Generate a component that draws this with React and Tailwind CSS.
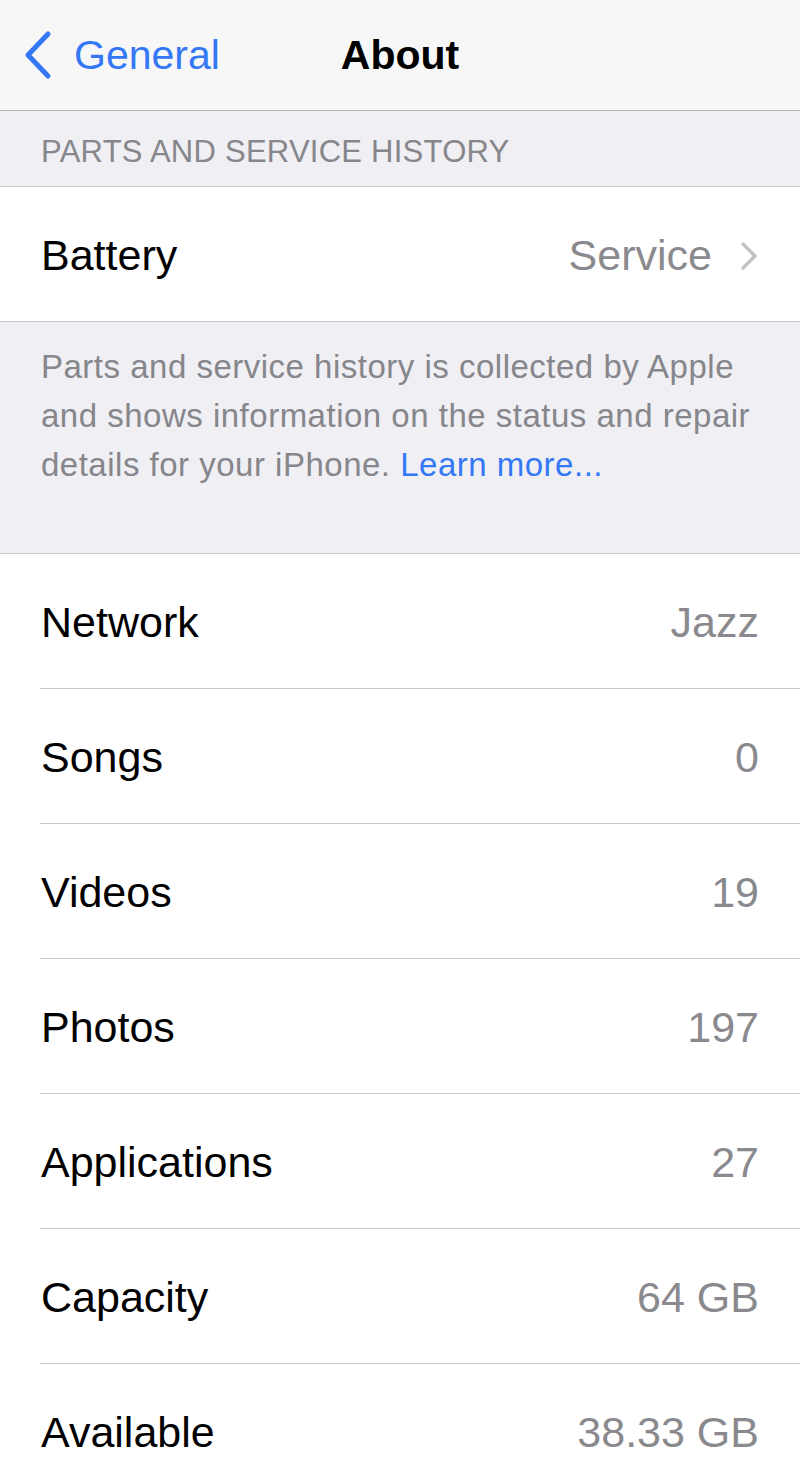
export default function App() {
  const rows = [
    ["Network", "Jazz"],
    ["Songs", "0"],
    ["Videos", "19"],
    ["Photos", "197"],
    ["Applications", "27"],
    ["Capacity", "64 GB"],
    ["Available", "38.33 GB"],
  ];
  const font = { fontFamily: '"Liberation Sans", Arial, sans-serif' };
  return (
    <div className="w-[800px] h-[1483px] overflow-hidden bg-white" style={font}>
      <div className="relative h-[111px] bg-[#f7f7f7] border-b border-[#b4b4b6] flex items-center justify-center">
        <div className="absolute left-[22px] top-0 h-full flex items-center gap-[22px] text-[#3478f6]">
          <svg width="30" height="50" viewBox="0 0 30 50" fill="none">
            <polyline points="26,4 6,25 26,46" stroke="#3478f6" strokeWidth="5" strokeLinecap="round" strokeLinejoin="round" />
          </svg>
          <span className="text-[41px] leading-none">General</span>
        </div>
        <span className="text-[41px] font-bold leading-none text-black">About</span>
      </div>
      <div className="h-[76px] bg-[#efeff4] border-b border-[#c8c7cc] flex items-center pl-[41px] pt-[6px]">
        <span className="text-[31px] text-[#86868b] leading-none tracking-[0.25px]">PARTS AND SERVICE HISTORY</span>
      </div>
      <div className="h-[135px] bg-white border-b border-[#c8c7cc] flex items-center justify-between pl-[41px] pr-[42px] pt-[3px]">
        <span className="text-[43px] text-black">Battery</span>
        <div className="flex items-center gap-[28px]">
          <span className="text-[43px] text-[#8a8a8e]">Service</span>
          <svg width="18" height="30" viewBox="0 0 18 30" fill="none">
            <polyline points="3,3 15,15 3,27" stroke="#c4c4c7" strokeWidth="3.5" strokeLinecap="round" strokeLinejoin="round" />
          </svg>
        </div>
      </div>
      <div className="h-[232px] bg-[#efeff4] border-b border-[#c8c7cc] pl-[41px] pr-[30px] pt-[20px]">
        <p className="text-[33px] leading-[49px] text-[#86868b] tracking-[0.5px]">
          Parts and service history is collected by Apple and shows information on the status and repair details for your iPhone.{" "}
          <span className="text-[#3478f6]">Learn more...</span>
        </p>
      </div>
      <div className="pl-[40px]">
        {rows.map(([label, value]) => (
          <div key={label} className="h-[135px] border-b border-[#c8c7cc] flex items-center justify-between pl-[1px] pr-[41px] pt-[2px]">
            <span className="text-[43px] text-black">{label}</span>
            <span className="text-[43px] text-[#8a8a8e]">{value}</span>
          </div>
        ))}
      </div>
    </div>
  );
}
